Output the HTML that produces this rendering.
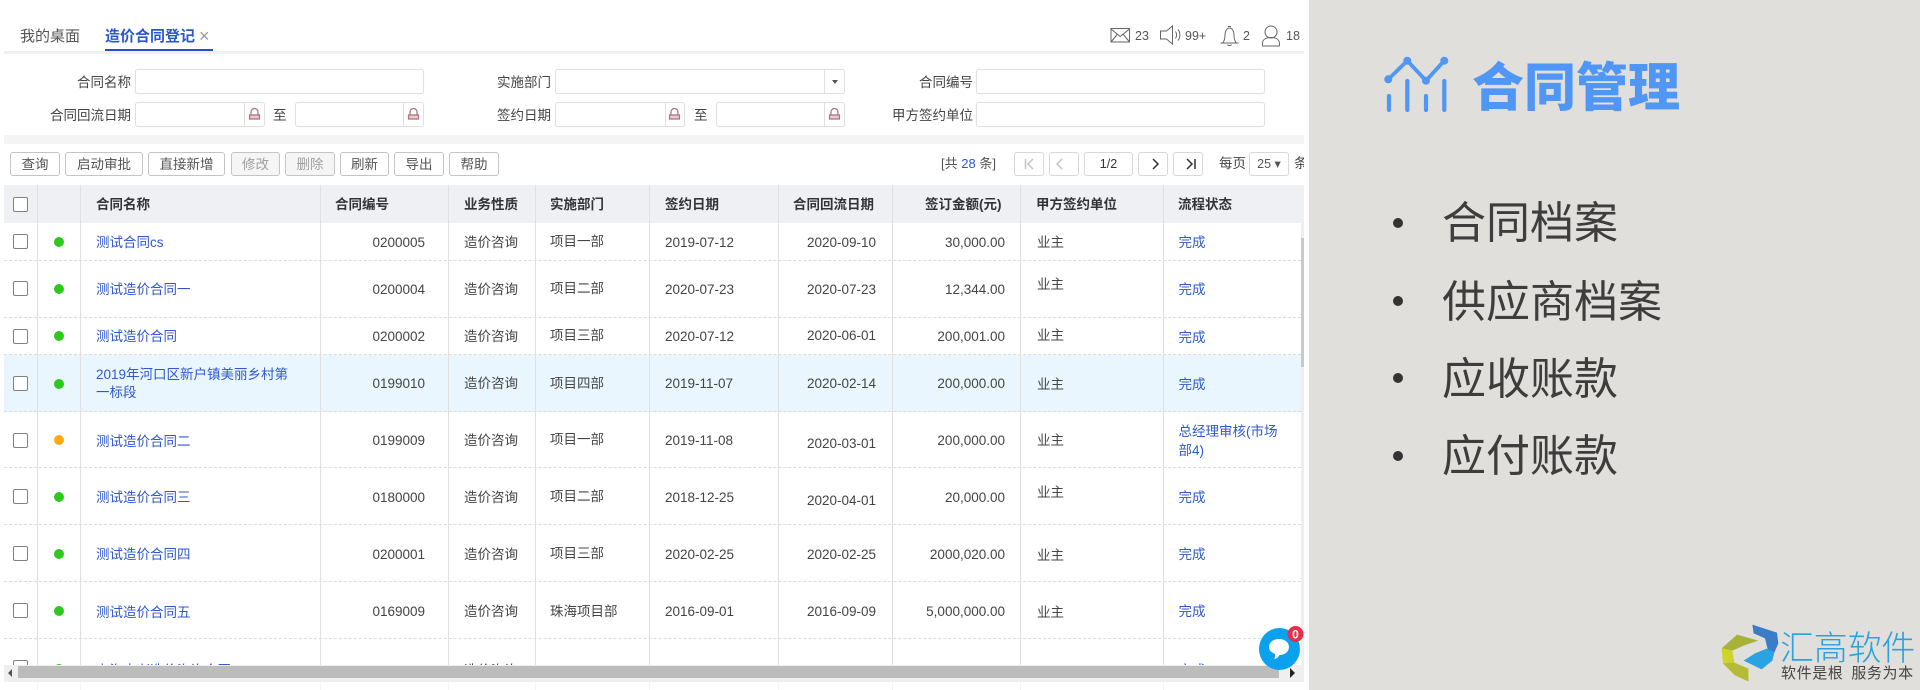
<!DOCTYPE html>
<html lang="zh"><head><meta charset="utf-8"><title>合同管理</title>
<style>
html,body{margin:0;padding:0;width:1920px;height:690px;overflow:hidden;background:#e0dfdb;font-family:"Liberation Sans","Noto Sans CJK SC",sans-serif}
*{box-sizing:border-box}
#app{position:absolute;left:0;top:0;width:1309px;height:690px;background:#fff;overflow:hidden;filter:blur(.3px);color:#444;font-size:13.5px}
#app>*{position:absolute}
.a{position:absolute;white-space:nowrap}
.lbl{text-align:right;line-height:27px;color:#444}
.in{border:1px solid #e0e0e0;border-radius:3px;height:25px;background:#fff;box-shadow:0 0 1px #eee}
.dv{width:1px;height:25px;background:#e0e0e0}
.btn{top:152px;height:24px;border:1px solid #c4c4c4;border-radius:3px;background:#fff;text-align:center;line-height:24px;color:#555}
.dis{color:#a0a0a0;background:#f5f5f5}
.pg{top:152px;height:24px;border:1px solid #d8d8d8;border-radius:3px;background:#fff;text-align:center;line-height:23px;color:#333}
.v{top:185px;bottom:0;width:1px;background:#e0e0e0;z-index:3}
.r{left:4px;width:1297px;border-bottom:1px dashed #dcdcdc}
.hd{top:186px;line-height:38px;font-weight:700;color:#333;z-index:4}
.c{position:absolute;white-space:nowrap;color:#444;transform:translateY(-50%);margin-top:1px;line-height:18px;z-index:4}
.cb{position:absolute;left:13px;width:15px;height:15px;border:1px solid #808080;border-radius:2px;background:#fff;z-index:4}
.dot{position:absolute;left:54px;width:10px;height:10px;border-radius:50%;background:#2fc81e;z-index:4}
.c.l{color:#2f58cc}
.n{left:96px}.co{right:884px}.t{left:464px}.d{left:550px}.s{left:665px}.b{right:433px}.m{right:304px}.o{left:1037px}.st{left:1178.5px}
.bul{position:absolute;left:1442px;font-size:44px;line-height:60px;color:#3d3d3d;font-weight:400;white-space:nowrap}
.bd{position:absolute;left:1393px;width:10px;height:10px;border-radius:50%;background:#333}
</style></head><body>
<div id="app">
  <span class="a" style="left:20px;top:26px;line-height:21px;font-size:15px;color:#555">我的桌面</span>
  <span class="a" style="left:105px;top:26px;line-height:21px;font-size:15px;font-weight:700;color:#2a58cc">造价合同登记</span>
  <span class="a" style="left:199px;top:26px;line-height:21px;font-size:18px;color:#999">×</span>
  <div style="left:105px;top:49px;width:108px;height:2px;background:#2250cc;z-index:2"></div>
  <div style="left:4px;top:51px;width:1300px;height:3px;background:#f1f1f1"></div>

  <svg style="left:1105px;top:20px" width="205" height="30" viewBox="0 0 205 30" fill="none" stroke="#666" stroke-width="1">
    <rect x="6" y="8.500" width="18.500" height="13.500"/><path d="M6 9l9.200 7.500L24.500 9M6 22l6.500-8M24.500 22l-6.500-8"/>
    <path d="M55.500 11h6l6-5v18l-6-5h-6zM70.500 11.500c1.500 2 1.500 5 0 7M73 9.500c2.500 3 2.500 8 0 11"/>
    <path d="M115.500 23h18M117.500 23c2-2 2.500-4 2.500-8 0-4 2-7 4.500-7s4.500 3 4.500 7c0 4 .5 6 2.500 8M123 6.500h3M122.500 24.500c.5 1.500 3.500 1.500 4 0"/>
    <circle cx="166" cy="12" r="6"/><path d="M157.500 25.500v-2c0-4 3.500-6 8.500-6s8.500 2 8.500 6v2c0 .5-1 .5-1 .5h-15s-1 0-1-.5z"/>
  </svg>
  <span class="a" style="left:1135px;top:28px;font-size:12.500px;line-height:16px;color:#555">23</span>
  <span class="a" style="left:1185px;top:28px;font-size:12.500px;line-height:16px;color:#555">99+</span>
  <span class="a" style="left:1243px;top:28px;font-size:12.500px;line-height:16px;color:#555">2</span>
  <span class="a" style="left:1286px;top:28px;font-size:12.500px;line-height:16px;color:#555">18</span>

  <!-- form -->
  <span class="a lbl" style="left:30px;width:101px;top:69px">合同名称</span>
  <div class="in" style="left:135px;top:69px;width:289px"></div>
  <span class="a lbl" style="left:30px;width:101px;top:102px">合同回流日期</span>
  <div class="in" style="left:135px;top:102px;width:130px"></div><div class="dv" style="left:244px;top:102px"></div>
  <span class="a" style="left:273px;top:102px;line-height:27px">至</span>
  <div class="in" style="left:295px;top:102px;width:129px"></div><div class="dv" style="left:403px;top:102px"></div>

  <span class="a lbl" style="left:450px;width:101px;top:69px">实施部门</span>
  <div class="in" style="left:555px;top:69px;width:290px"></div><div class="dv" style="left:824px;top:69px"></div>
  <div style="left:832px;top:80px;border:3px solid transparent;border-top:4px solid #555;border-bottom:0"></div>
  <span class="a lbl" style="left:450px;width:101px;top:102px">签约日期</span>
  <div class="in" style="left:555px;top:102px;width:130px"></div><div class="dv" style="left:665px;top:102px"></div>
  <span class="a" style="left:694px;top:102px;line-height:27px">至</span>
  <div class="in" style="left:716px;top:102px;width:129px"></div><div class="dv" style="left:824px;top:102px"></div>

  <span class="a lbl" style="left:870px;width:103px;top:69px">合同编号</span>
  <div class="in" style="left:976px;top:69px;width:289px"></div>
  <span class="a lbl" style="left:870px;width:103px;top:102px">甲方签约单位</span>
  <div class="in" style="left:976px;top:102px;width:289px"></div>

  <svg style="left:0;top:102px" width="860" height="25" fill="none" stroke="#a8727a" stroke-width="1.200">
    <path d="M251 13v-3a3.500 3.500 0 0 1 7 0v3"/><path d="M249.500 13h10v4h-10z" fill="#e9c9cd"/>
    <path d="M410 13v-3a3.500 3.500 0 0 1 7 0v3"/><path d="M408.500 13h10v4h-10z" fill="#e9c9cd"/>
    <path d="M671 13v-3a3.500 3.500 0 0 1 7 0v3"/><path d="M669.500 13h10v4h-10z" fill="#e9c9cd"/>
    <path d="M831 13v-3a3.500 3.500 0 0 1 7 0v3"/><path d="M829.500 13h10v4h-10z" fill="#e9c9cd"/>
  </svg>

  <div style="left:4px;top:135px;width:1300px;height:9px;background:#f4f4f4"></div>

  <!-- toolbar -->
  <div class="btn" style="left:10px;width:50px">查询</div>
  <div class="btn" style="left:65px;width:78px">启动审批</div>
  <div class="btn" style="left:148px;width:77px">直接新增</div>
  <div class="btn dis" style="left:231px;width:49px">修改</div>
  <div class="btn dis" style="left:285px;width:50px">删除</div>
  <div class="btn" style="left:340px;width:49px">刷新</div>
  <div class="btn" style="left:394px;width:50px">导出</div>
  <div class="btn" style="left:449px;width:50px">帮助</div>

  <span class="a" style="left:941px;top:152px;line-height:24px;color:#555;font-size:13px">[共 <span style="color:#2f58cc">28</span> 条]</span>
  <div class="pg" style="left:1014px;width:30px"></div>
  <div class="pg" style="left:1049px;width:30px"></div>
  <div class="pg" style="left:1084px;width:49px;font-size:12.500px">1/2</div>
  <div class="pg" style="left:1138px;width:30px"></div>
  <div class="pg" style="left:1173px;width:30px"></div>
  <svg style="left:1014px;top:152px;z-index:2" width="190" height="24" fill="none" stroke-width="1.500">
    <path d="M11.500 7v10M19 7l-5 5 5 5" stroke="#c4c4c4"/>
    <path d="M48 7l-5 5 5 5" stroke="#c4c4c4"/>
    <path d="M139 7l5 5-5 5" stroke="#333"/>
    <path d="M173 7l5 5-5 5M181 7v10" stroke="#333"/>
  </svg>
  <span class="a" style="left:1219px;top:152px;line-height:24px">每页</span>
  <div class="pg" style="left:1249px;width:40px;font-size:12.500px;color:#555">25 ▾</div>
  <div style="left:1294px;top:152px;width:10px;height:24px;overflow:hidden;line-height:24px">条</div>

  <!-- table header -->
  <div style="left:4px;top:185px;width:1300px;height:38px;background:#eef0f4"></div>
  <div class="cb" style="top:197px"></div>
  <span class="a hd" style="left:96px">合同名称</span>
  <span class="a hd" style="left:335px">合同编号</span>
  <span class="a hd" style="left:464px">业务性质</span>
  <span class="a hd" style="left:550px">实施部门</span>
  <span class="a hd" style="left:665px">签约日期</span>
  <span class="a hd" style="left:793px">合同回流日期</span>
  <span class="a hd" style="left:925px">签订金额(元)</span>
  <span class="a hd" style="left:1036px">甲方签约单位</span>
  <span class="a hd" style="left:1178px">流程状态</span>

  <!-- rows -->
  <div class="r" style="top:223px;height:38px"></div>
  <div class="r" style="top:261px;height:57px"></div>
  <div class="r" style="top:318px;height:37px"></div>
  <div class="r" style="top:355px;height:57px;background:#eaf6fe"></div>
  <div class="r" style="top:412px;height:56px"></div>
  <div class="r" style="top:468px;height:57px"></div>
  <div class="r" style="top:525px;height:57px"></div>
  <div class="r" style="top:582px;height:57px"></div>

  <div class="v" style="left:37px"></div><div class="v" style="left:80px"></div><div class="v" style="left:320px"></div><div class="v" style="left:448px"></div><div class="v" style="left:535px"></div><div class="v" style="left:649px"></div><div class="v" style="left:778px"></div><div class="v" style="left:892px"></div><div class="v" style="left:1020px"></div><div class="v" style="left:1163px"></div>

  <div class="cb" style="top:234px"></div><i class="dot" style="top:237px"></i>
  <span class="c l n" style="top:242px">测试合同cs</span><span class="c co" style="top:242px">0200005</span><span class="c t" style="top:242px">造价咨询</span><span class="c d" style="top:241px">项目一部</span><span class="c s" style="top:242px">2019-07-12</span><span class="c b" style="top:242px">2020-09-10</span><span class="c m" style="top:242px">30,000.00</span><span class="c o" style="top:242px">业主</span><span class="c l st" style="top:242px">完成</span>

  <div class="cb" style="top:281px"></div><i class="dot" style="top:284px"></i>
  <span class="c l n" style="top:289px">测试造价合同一</span><span class="c co" style="top:289px">0200004</span><span class="c t" style="top:289px">造价咨询</span><span class="c d" style="top:288px">项目二部</span><span class="c s" style="top:289px">2020-07-23</span><span class="c b" style="top:289px">2020-07-23</span><span class="c m" style="top:289px">12,344.00</span><span class="c o" style="top:284px">业主</span><span class="c l st" style="top:289px">完成</span>

  <div class="cb" style="top:329px"></div><i class="dot" style="top:331px"></i>
  <span class="c l n" style="top:336px">测试造价合同</span><span class="c co" style="top:336px">0200002</span><span class="c t" style="top:336px">造价咨询</span><span class="c d" style="top:335px">项目三部</span><span class="c s" style="top:336px">2020-07-12</span><span class="c b" style="top:335px">2020-06-01</span><span class="c m" style="top:336px">200,001.00</span><span class="c o" style="top:335px">业主</span><span class="c l st" style="top:337px">完成</span>

  <div class="cb" style="top:376px"></div><i class="dot" style="top:379px"></i>
  <span class="c l n" style="top:374px">2019年河口区新户镇美丽乡村第</span><span class="c l n" style="top:392px">一标段</span><span class="c co" style="top:383px">0199010</span><span class="c t" style="top:383px">造价咨询</span><span class="c d" style="top:383px">项目四部</span><span class="c s" style="top:383px">2019-11-07</span><span class="c b" style="top:383px">2020-02-14</span><span class="c m" style="top:383px">200,000.00</span><span class="c o" style="top:384px">业主</span><span class="c l st" style="top:384px">完成</span>

  <div class="cb" style="top:433px"></div><i class="dot" style="top:435px;background:#fdab14"></i>
  <span class="c l n" style="top:441px">测试造价合同二</span><span class="c co" style="top:440px">0199009</span><span class="c t" style="top:440px">造价咨询</span><span class="c d" style="top:439px">项目一部</span><span class="c s" style="top:440px">2019-11-08</span><span class="c b" style="top:443px">2020-03-01</span><span class="c m" style="top:440px">200,000.00</span><span class="c o" style="top:440px">业主</span><span class="c l st" style="top:431px">总经理审核(市场</span><span class="c l st" style="top:450px">部4)</span>

  <div class="cb" style="top:489px"></div><i class="dot" style="top:492px"></i>
  <span class="c l n" style="top:497px">测试造价合同三</span><span class="c co" style="top:497px">0180000</span><span class="c t" style="top:497px">造价咨询</span><span class="c d" style="top:496px">项目二部</span><span class="c s" style="top:497px">2018-12-25</span><span class="c b" style="top:500px">2020-04-01</span><span class="c m" style="top:497px">20,000.00</span><span class="c o" style="top:492px">业主</span><span class="c l st" style="top:497px">完成</span>

  <div class="cb" style="top:546px"></div><i class="dot" style="top:549px"></i>
  <span class="c l n" style="top:554px">测试造价合同四</span><span class="c co" style="top:554px">0200001</span><span class="c t" style="top:554px">造价咨询</span><span class="c d" style="top:553px">项目三部</span><span class="c s" style="top:554px">2020-02-25</span><span class="c b" style="top:554px">2020-02-25</span><span class="c m" style="top:554px">2000,020.00</span><span class="c o" style="top:555px">业主</span><span class="c l st" style="top:554px">完成</span>

  <div class="cb" style="top:603px"></div><i class="dot" style="top:606px"></i>
  <span class="c l n" style="top:612px">测试造价合同五</span><span class="c co" style="top:611px">0169009</span><span class="c t" style="top:611px">造价咨询</span><span class="c d" style="top:611px">珠海项目部</span><span class="c s" style="top:611px">2016-09-01</span><span class="c b" style="top:611px">2016-09-09</span><span class="c m" style="top:611px">5,000,000.00</span><span class="c o" style="top:612px">业主</span><span class="c l st" style="top:611px">完成</span>

  <div class="cb" style="top:660px"></div><i class="dot" style="top:664px"></i>
  <span class="c l n" style="top:670px">上海大兴造价咨询合同</span><span class="c co" style="top:670px">ZJZX19010007</span><span class="c t" style="top:670px">造价咨询</span><span class="c s" style="top:670px">2018-08-01</span><span class="c m" style="top:670px">9,000,000.00</span><span class="c l st" style="top:670px">完成</span>

  <!-- scrollbars -->
  <div style="left:4px;top:665px;width:1300px;height:17px;background:#efefef;z-index:6"></div>
  <div style="left:18px;top:666px;width:1261px;height:12px;background:#bcbcbc;z-index:6"></div>
  <div style="left:8px;top:669px;border:4px solid transparent;border-right:4px solid #555;border-left:0;z-index:6"></div>
  <div style="left:1290px;top:668px;border:5px solid transparent;border-left:5px solid #222;border-right:0;z-index:6"></div>
  <div style="left:1301px;top:223px;width:3px;height:442px;background:#eee;z-index:5"></div>
  <div style="left:1301px;top:238px;width:3px;height:129px;background:#c9c9c9;z-index:6"></div>
  <div style="left:0;top:682px;width:1309px;height:8px;background:rgba(255,255,255,.65);z-index:5"></div>

  <!-- chat -->
  <svg style="left:1255px;top:624px;z-index:8" width="54" height="50" viewBox="0 0 54 50">
    <ellipse cx="24.500" cy="25" rx="20.500" ry="21" fill="#0aa1ef"/>
    <path d="M24 15c6 0 10 3.500 10 8s-4 8-9.500 8c-1 2-3 4-5.500 4 1-1.500 1.500-3 1-5-3.500-1.500-6-3.500-6-7 0-4.500 4-8 10-8z" fill="#fff"/>
    <circle cx="40.500" cy="10" r="8" fill="#e5304a"/>
    <text x="40.500" y="14.500" text-anchor="middle" font-size="12" font-weight="700" fill="#fff" font-family="Liberation Sans">0</text>
  </svg>
</div>

<!-- right panel -->
<svg style="position:absolute;left:1380px;top:50px" width="75" height="66" viewBox="1380 50 75 66" fill="none" stroke="#4f96f7">
  <path d="M1388.300 79.300L1407.300 60.700L1426 80.700L1444.300 60.700" stroke-width="3.800"/>
  <g fill="#4f96f7" stroke="none"><circle cx="1388.300" cy="79.300" r="4"/><circle cx="1407.300" cy="60.700" r="4"/><circle cx="1426" cy="80.700" r="4"/><circle cx="1444.300" cy="60.700" r="4"/></g>
  <path d="M1389 96v14M1407.300 81v29M1426 96v14M1444.300 81v29" stroke-width="4.200" stroke-linecap="round"/>
</svg>
<div style="position:absolute;left:1472px;top:48px;font-size:52px;line-height:72px;font-weight:900;color:#4f96f7;white-space:nowrap;font-family:'Noto Sans CJK SC',sans-serif">合同管理</div>

<i class="bd" style="top:218px"></i><div class="bul" style="top:194px">合同档案</div>
<i class="bd" style="top:296px"></i><div class="bul" style="top:273px">供应商档案</div>
<i class="bd" style="top:373px"></i><div class="bul" style="top:350px">应收账款</div>
<i class="bd" style="top:451px"></i><div class="bul" style="top:427px">应付账款</div>

<svg style="position:absolute;left:1715px;top:620px" width="70" height="68" viewBox="0 0 210 204">
  <path d="M112 14L186 38L190 70L178 98L158 88L150 55L116 40z" fill="#3a7cc6"/>
  <path d="M86 122L120 100L155 86L178 98L172 122L140 148z" fill="#2aa3e2"/>
  <path d="M130 62L66 44L20 85L52 92L88 76z" fill="#a9b238"/>
  <path d="M20 85L52 92L58 128L100 146L100 184L60 166L24 130z" fill="#cdd52c"/>
  <path d="M24 130L58 128L100 146L100 184L60 166z" fill="#b5bb35"/>
</svg>
<div style="position:absolute;left:1780px;top:626px;font-size:34px;line-height:40px;color:#2ba2dc;white-space:nowrap;font-weight:300;letter-spacing:-.2px;font-family:'Noto Sans CJK SC',sans-serif">汇高软件</div>
<div style="position:absolute;left:1781px;top:663px;font-size:15px;line-height:20px;color:#444;white-space:nowrap;letter-spacing:.6px;font-family:'Noto Sans CJK SC',sans-serif">软件是根&nbsp;&nbsp;服务为本</div>
</body></html>
